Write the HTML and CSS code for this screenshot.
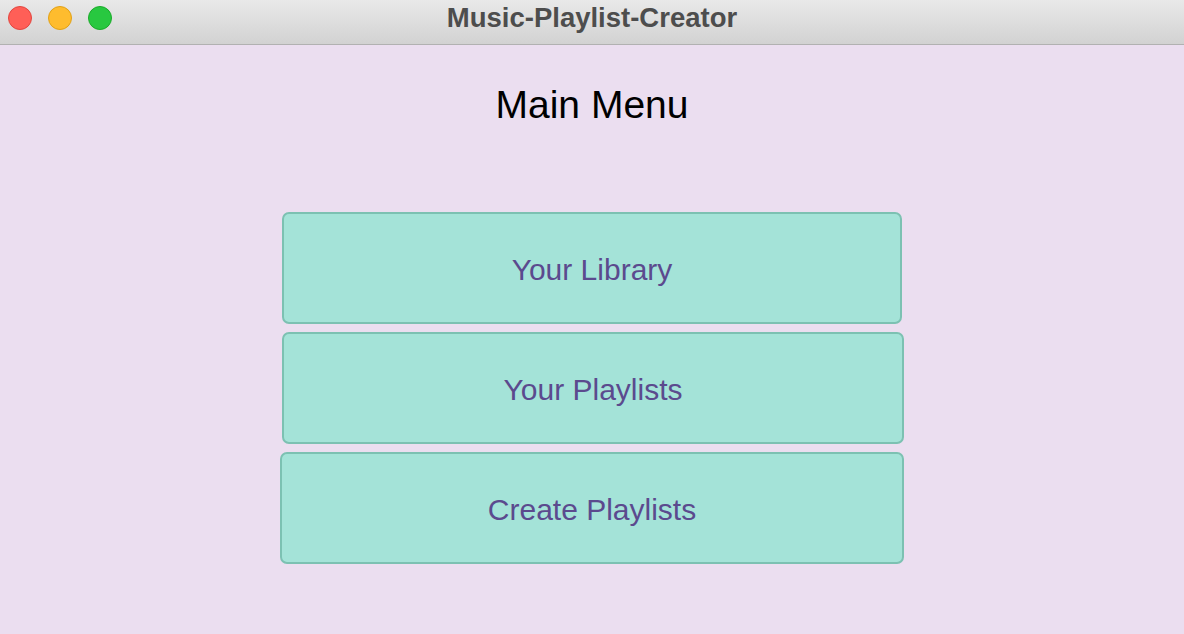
FILE: index.html
```html
<!DOCTYPE html>
<html>
<head>
<meta charset="utf-8">
<link rel="stylesheet" href="styles.css">
</head>
<body>
<div class="window">
  <div class="titlebar">
    <div class="lights">
      <span class="light red"></span>
      <span class="light yellow"></span>
      <span class="light green"></span>
    </div>
    <div class="title">Music-Playlist-Creator</div>
  </div>
  <div class="content">
    <h1 class="heading">Main Menu</h1>
    <div class="menu">
      <button class="btn btn-a">Your Library</button>
      <button class="btn btn-b">Your Playlists</button>
      <button class="btn btn-c">Create Playlists</button>
    </div>
  </div>
</div>
</body>
</html>
```
FILE: styles.css
```css
html, body {
  margin: 0;
  padding: 0;
  width: 1184px;
  height: 634px;
  overflow: hidden;
  font-family: "Liberation Sans", Arial, sans-serif;
}
.window {
  display: flex;
  flex-direction: column;
  width: 1184px;
  height: 634px;
  background: #ebdef0;
}
.titlebar {
  position: relative;
  height: 44px;
  flex: none;
  background: linear-gradient(#e9e9e9, #d2d2d2);
  border-bottom: 1px solid #b1b1b1;
  display: flex;
  align-items: center;
  justify-content: center;
}
.lights {
  position: absolute;
  left: 8px;
  top: 6px;
  display: flex;
  gap: 16px;
}
.light {
  width: 22px;
  height: 22px;
  border-radius: 50%;
  border: 1px solid rgba(0,0,0,0.12);
}
.red { background: #ff5f57; border-color: #e2463f; }
.yellow { background: #febc2e; border-color: #e1a116; }
.green { background: #28c840; border-color: #1aab29; }
.title {
  font-weight: bold;
  font-size: 27.5px;
  color: #4d4d4d;
  margin-top: -9px;
}
.content {
  display: flex;
  flex-direction: column;
  align-items: center;
}
.heading {
  margin: 38px 0 0 0;
  font-weight: normal;
  font-size: 39px;
  line-height: 44px;
  color: #000;
}
.menu {
  margin-top: 85px;
  width: 624px;
  display: flex;
  flex-direction: column;
  align-items: flex-start;
  gap: 8px;
}
.btn {
  height: 112px;
  background: #a4e3d8;
  border: 2px solid #7cc1b2;
  border-radius: 7px;
  color: #5b4a8e;
  font-family: "Liberation Sans", Arial, sans-serif;
  font-size: 30px;
  padding: 3px 0 0 0;
}
.btn-a { width: 620px; margin-left: 2px; }
.btn-b { width: 622px; margin-left: 2px; }
.btn-c { width: 624px; }
```
